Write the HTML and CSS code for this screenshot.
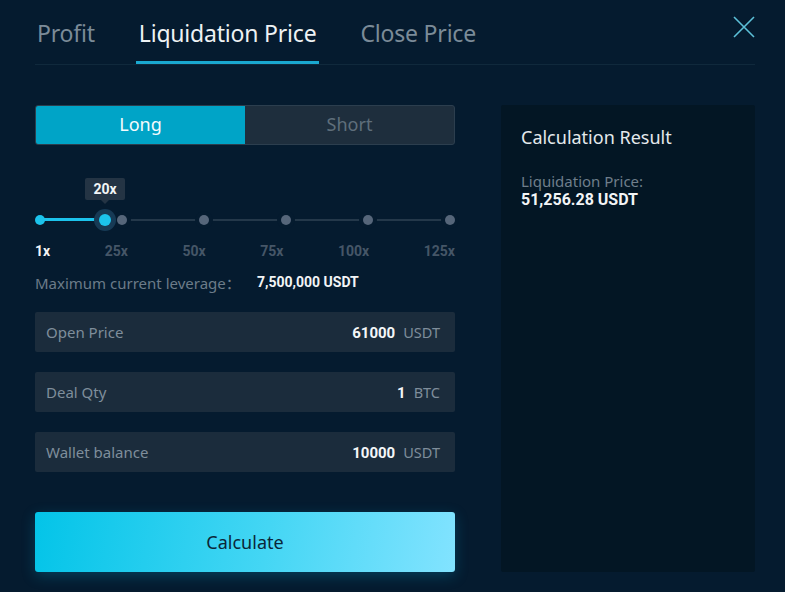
FILE: index.html
```html
<!DOCTYPE html>
<html lang="en">
<head>
<meta charset="utf-8">
<title>Liquidation Price Calculator</title>
<link rel="stylesheet" href="styles.css">
</head>
<body>
<div class="modal">
  <div class="header">
    <nav class="tabs">
      <span class="tab">Profit</span>
      <span class="tab active">Liquidation Price</span>
      <span class="tab">Close Price</span>
    </nav>
    <button class="close" aria-label="Close">
      <svg width="22" height="22" viewBox="0 0 22 22"><path d="M1 1 L21 21 M21 1 L1 21" stroke="#5cc0d8" stroke-width="1.6" fill="none"/></svg>
    </button>
  </div>
  <div class="body">
    <div class="form">
      <div class="toggle">
        <span class="side on">Long</span>
        <span class="side">Short</span>
      </div>
      <div class="slider">
        <div class="tip">20x</div>
        <div class="track">
          <div class="rail"></div>
          <div class="fill"></div>
          <span class="dot on"></span>
          <span class="dot"></span>
          <span class="dot"></span>
          <span class="dot"></span>
          <span class="dot"></span>
          <span class="dot"></span>
          <span class="thumb"></span>
        </div>
      </div>
      <div class="marks">
        <span class="mark on">1x</span>
        <span class="mark">25x</span>
        <span class="mark">50x</span>
        <span class="mark">75x</span>
        <span class="mark">100x</span>
        <span class="mark">125x</span>
      </div>
      <div class="maxlev">
        <span class="ml-label">Maximum current leverage：</span>
        <span class="ml-value">7,500,000 USDT</span>
      </div>
      <div class="field">
        <span class="f-label">Open Price</span>
        <span class="f-right"><b class="f-val">61000</b><span class="f-unit">USDT</span></span>
      </div>
      <div class="field">
        <span class="f-label">Deal Qty</span>
        <span class="f-right"><b class="f-val">1</b><span class="f-unit">BTC</span></span>
      </div>
      <div class="field">
        <span class="f-label">Wallet balance</span>
        <span class="f-right"><b class="f-val">10000</b><span class="f-unit">USDT</span></span>
      </div>
      <button class="calc">Calculate</button>
    </div>
    <aside class="result">
      <h2 class="r-title">Calculation Result</h2>
      <div class="r-label">Liquidation Price:</div>
      <div class="r-value">51,256.28 USDT</div>
    </aside>
  </div>
</div>
</body>
</html>
```
FILE: styles.css
```css
* { box-sizing: border-box; }
html, body { margin: 0; padding: 0; }
body {
  background: #051b2f;
  font-family: "Noto Sans", "Open Sans", sans-serif;
  color: #fff;
}
.modal {
  width: 785px;
  height: 592px;
  padding: 0 30px 0 35px;
}
.header {
  display: flex;
  justify-content: space-between;
  align-items: flex-start;
  border-bottom: 1px solid #10293c;
  height: 65px;
}
.tabs {
  display: flex;
  gap: 40px;
  height: 64px;
}
.tab {
  font-size: 23px;
  line-height: 66px;
  color: #7b8b98;
  padding: 0 2px;
  letter-spacing: -0.2px;
  position: relative;
}
.tab.active {
  color: #eef2f4;
}
.tab.active::after {
  content: "";
  position: absolute;
  left: -1px;
  right: -1px;
  bottom: 0;
  height: 3px;
  background: #1aa8d0;
}
.close {
  margin-top: 16px;
  background: none;
  border: 0;
  padding: 0;
  width: 22px;
  height: 22px;
  display: block;
}
.body {
  display: flex;
  gap: 46px;
  padding-top: 40px;
}
.form {
  width: 420px;
  display: flex;
  flex-direction: column;
}
.toggle {
  display: flex;
  height: 40px;
  border: 1px solid #2c3e4e;
  border-radius: 3px;
  background: #1e2e3d;
  overflow: hidden;
}
.side {
  flex: 1;
  text-align: center;
  font-size: 18px;
  line-height: 36px;
  color: #5f6e7b;
}
.side.on {
  background: #00a4c7;
  color: #f4fbfd;
}
.slider {
  position: relative;
  margin-top: 33px;
  height: 52px;
}
.tip {
  position: absolute;
  left: 50px;
  top: 0;
  width: 40px;
  height: 22px;
  background: #243444;
  border-radius: 2px;
  font-family: Roboto, sans-serif;
  font-weight: 700;
  font-size: 14px;
  line-height: 22px;
  text-align: center;
  color: #f2f4f6;
}
.tip::after {
  content: "";
  position: absolute;
  left: 16px;
  bottom: -4px;
  border: 4px solid transparent;
  border-bottom: 0;
  border-top-color: #243444;
}
.track {
  position: absolute;
  left: 0;
  right: 0;
  top: 37px;
  height: 10px;
  display: flex;
  justify-content: space-between;
  align-items: center;
}
.rail {
  position: absolute;
  left: 5px;
  right: 5px;
  top: 4px;
  height: 2px;
  background: #24384a;
}
.fill {
  position: absolute;
  left: 5px;
  width: 66px;
  top: 3px;
  height: 3px;
  background: #1cc3ec;
}
.dot {
  position: relative;
  width: 10px;
  height: 10px;
  border-radius: 50%;
  background: #56667a;
  box-shadow: 0 0 0 4px #051b2f;
}
.dot:first-of-type { box-shadow: none; }
.dot.on { background: #1cc3ec; }
.thumb {
  position: absolute;
  left: 64px;
  top: -1px;
  width: 12px;
  height: 12px;
  border-radius: 50%;
  background: #1cc3ec;
  box-shadow: 0 0 0 5px #173a55;
}
.marks {
  display: flex;
  justify-content: space-between;
  margin-top: 13px;
  font-family: Roboto, sans-serif;
  font-weight: 700;
  font-size: 14px;
  line-height: 16px;
  color: #455667;
}
.mark.on { color: #f2f4f6; }
.maxlev {
  display: flex;
  align-items: center;
  margin-top: 14px;
  height: 18px;
}
.ml-label {
  font-size: 15px;
  color: #6c7b89;
  width: 222px;
  white-space: nowrap;
  font-family: "Noto Sans", "Noto Sans CJK SC", sans-serif;
}
.ml-value {
  font-family: Roboto, sans-serif;
  font-weight: 700;
  font-size: 14px;
  color: #f2f4f6;
}
.field {
  display: flex;
  justify-content: space-between;
  align-items: center;
  height: 40px;
  margin-top: 20px;
  padding: 0 15px 0 11px;
  background: #1b2c3c;
  border-radius: 2px;
}
.maxlev + .field { margin-top: 21px; }
.f-label {
  font-size: 15px;
  color: #7f8e9b;
}
.f-right {
  display: flex;
  align-items: baseline;
  gap: 8px;
}
.f-val {
  font-family: Roboto, sans-serif;
  font-weight: 700;
  font-size: 15px;
  color: #f4f6f8;
}
.f-unit {
  font-size: 14.5px;
  color: #7f8e9b;
}
.calc {
  margin-top: 40px;
  height: 60px;
  width: 420px;
  border: 0;
  border-radius: 3px;
  background: linear-gradient(100deg, #03c4e8 0%, #44d6f4 55%, #82e3ff 100%);
  box-shadow: 0 4px 14px rgba(0, 170, 220, 0.25);
  font-family: "Noto Sans", "Open Sans", sans-serif;
  font-size: 18px;
  color: #0b2638;
  padding: 0;
}
.result {
  width: 254px;
  height: 467px;
  background: #031624;
  border-radius: 2px;
  padding: 20px 20px;
}
.r-title {
  margin: 0;
  font-weight: 400;
  font-size: 18px;
  line-height: 24px;
  color: #e4e9ec;
}
.r-label {
  margin-top: 23px;
  font-size: 15px;
  line-height: 18px;
  color: #6f7e8b;
}
.r-value {
  font-family: Roboto, sans-serif;
  font-weight: 700;
  font-size: 16px;
  line-height: 20px;
  color: #f2f4f6;
}
```
